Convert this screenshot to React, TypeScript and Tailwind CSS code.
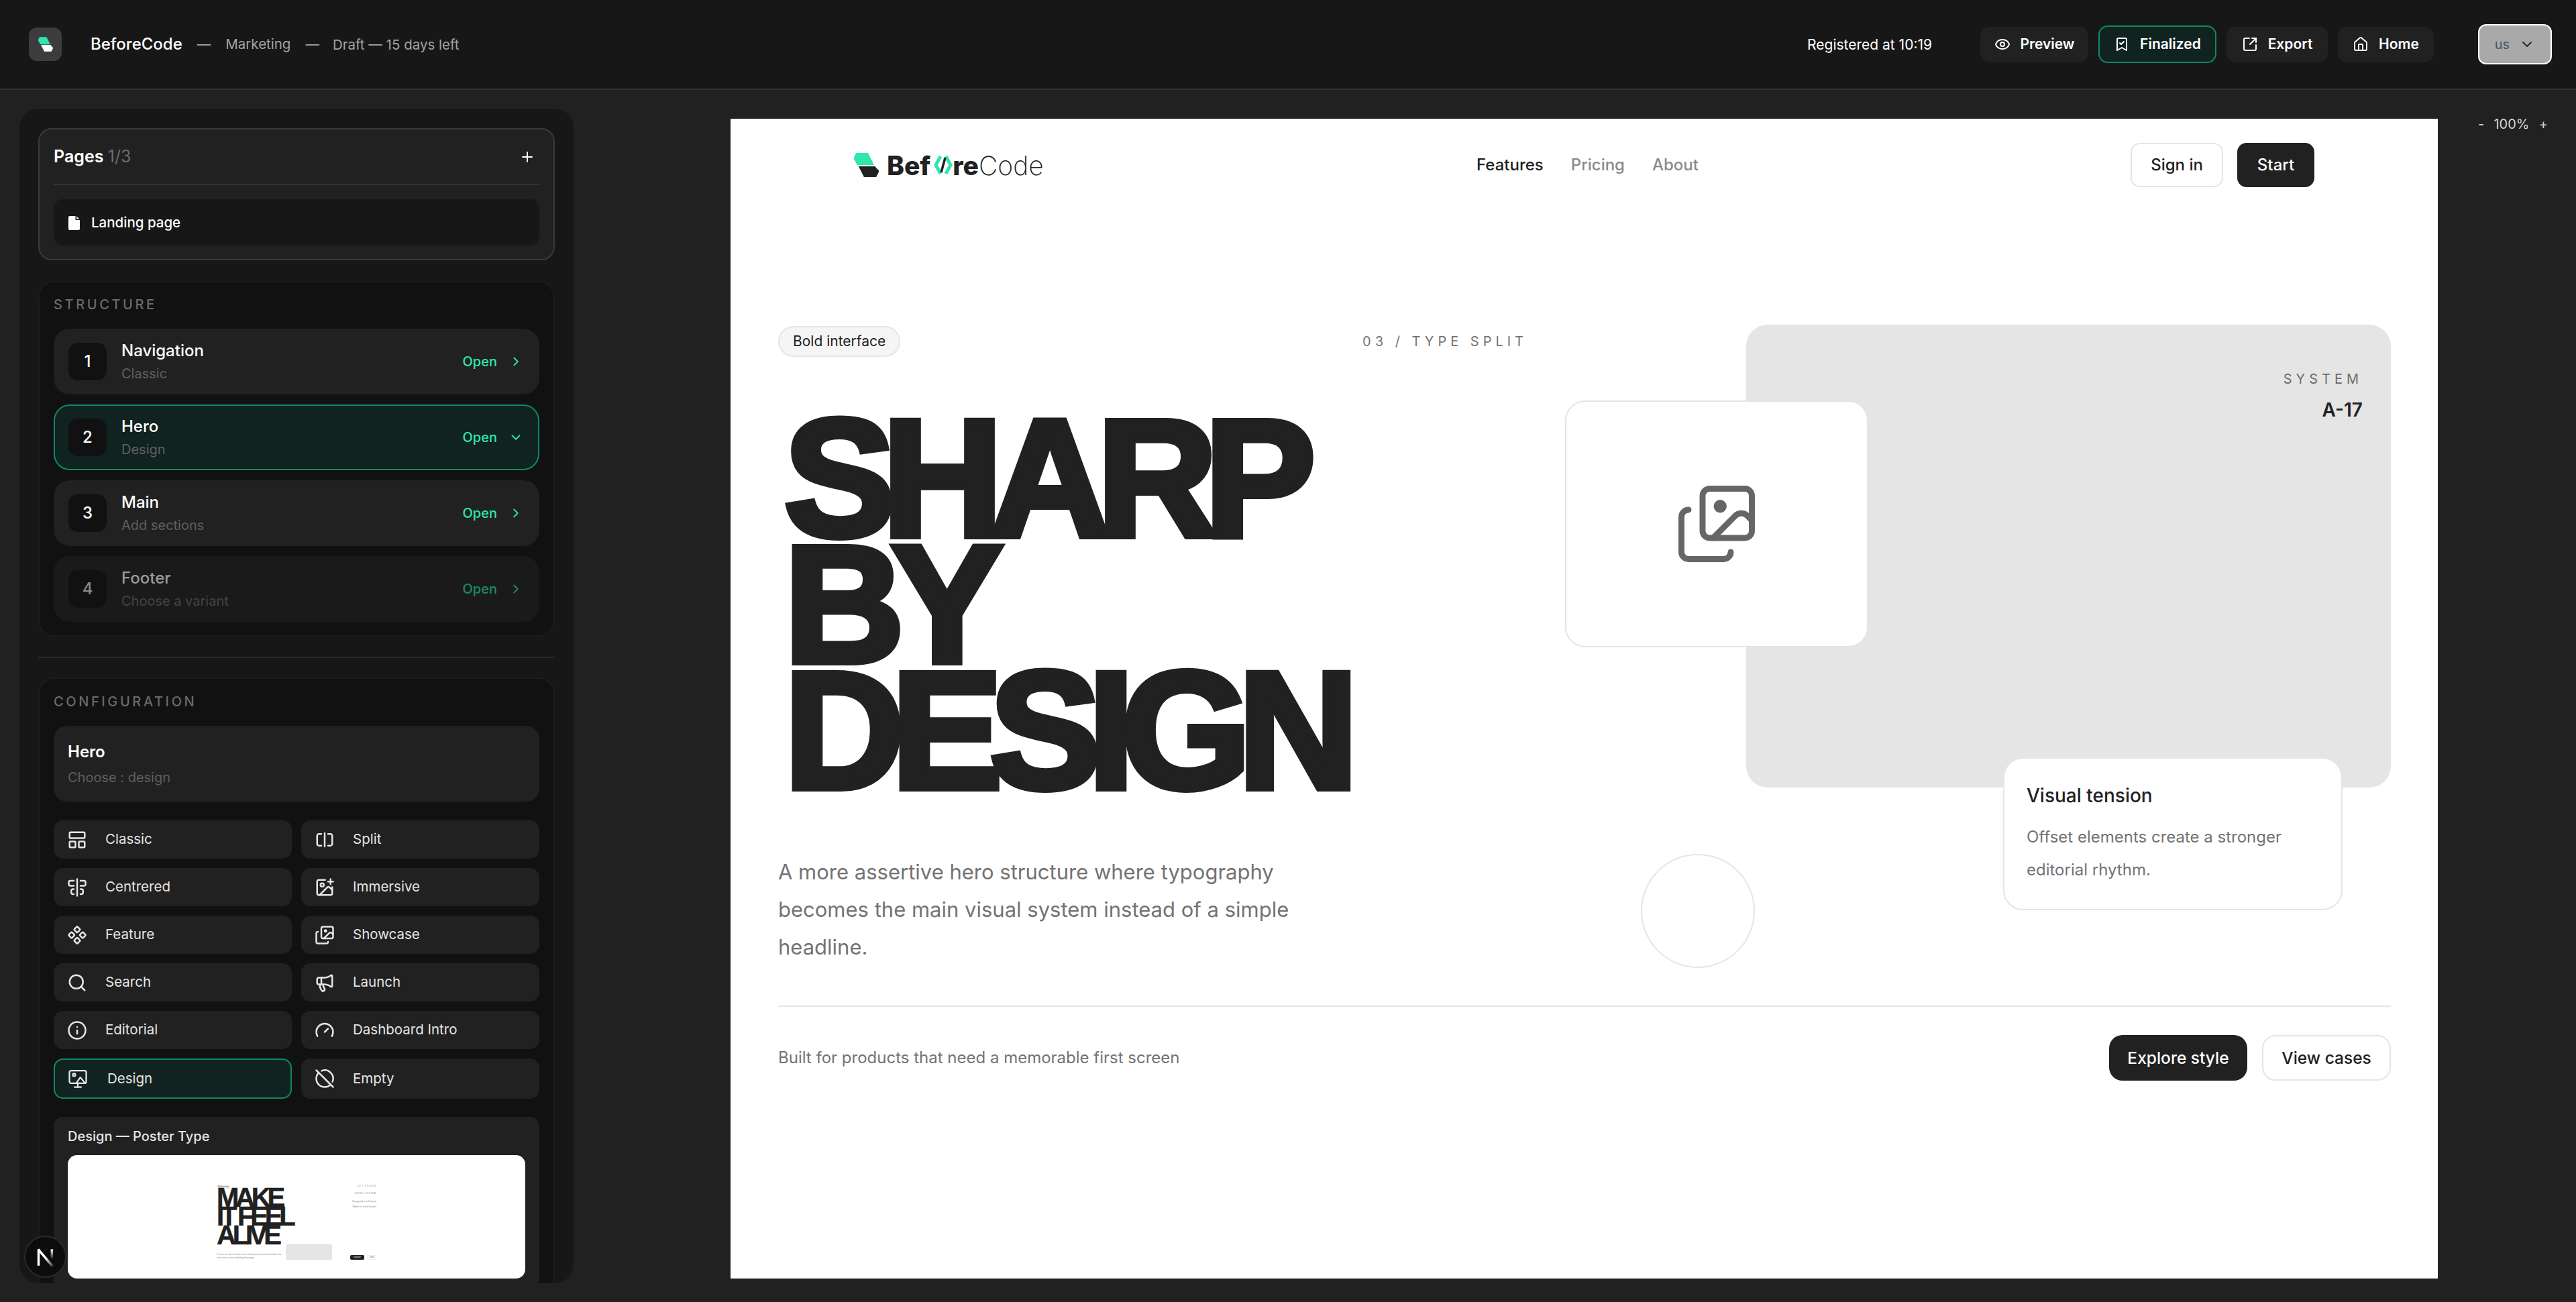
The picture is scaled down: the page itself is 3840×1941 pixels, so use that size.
import {
  AlignCenterVertical,
  BookmarkCheck,
  ChevronDown,
  ChevronRight,
  CircleOff,
  Component,
  Eye,
  Gauge,
  House,
  ImagePlus,
  Images,
  Info,
  LayoutPanelTop,
  Megaphone,
  Plus,
  Search,
  SquareArrowOutUpRight,
  SquareSplitHorizontal,
} from "lucide-react";
import type { ComponentType } from "react";

function LogoMark({ bottom, className }: { bottom: string; className: string }) {
  return (
    <svg viewBox="0 0 108 103" className={className}>
      <polygon points="10,0 60,0 85,50 15,50 0,22" fill="#2ee6b0" stroke="#2ee6b0" strokeWidth="3" strokeLinejoin="round" />
      <polygon points="22,58 90,58 108,78 95,103 45,103" fill={bottom} stroke={bottom} strokeWidth="3" strokeLinejoin="round" />
    </svg>
  );
}

function MonitorImage({ className }: { className: string }) {
  return (
    <svg viewBox="0 0 24 24" fill="none" stroke="currentColor" strokeWidth="1.8" strokeLinecap="round" strokeLinejoin="round" className={className}>
      <rect x="2" y="2.5" width="20" height="15" rx="2" />
      <circle cx="7.5" cy="7.5" r="1.6" />
      <path d="m10 17.5 5-7 5 6" />
      <path d="M12 17.5V22" />
      <path d="M8 22h8" />
    </svg>
  );
}

function HeaderButton({
  icon: Icon,
  label,
  width,
  active,
}: {
  icon: ComponentType<{ className?: string }>;
  label: string;
  width: string;
  active?: boolean;
}) {
  return (
    <button
      className={
        active
          ? `flex h-[56px] items-center justify-center gap-[15px] rounded-[14px] border-2 border-[#0f8a5f] bg-[#112320] text-[21px] font-semibold text-white ${width}`
          : `flex h-[53px] items-center justify-center gap-[15px] rounded-[14px] bg-[#212121] text-[21px] font-semibold text-white ${width}`
      }
    >
      <Icon className="h-[24px] w-[24px]" />
      <span>{label}</span>
    </button>
  );
}

function TopBar() {
  return (
    <header className="flex h-[134px] shrink-0 items-center justify-between border-b-2 border-[#333333] bg-[#171717] pl-[43px] pr-[36px]">
      <div className="flex items-center">
        <div className="flex h-[50px] w-[49px] items-center justify-center rounded-[12px] bg-[#3c3c3c]">
          <LogoMark bottom="#ffffff" className="h-[22px] w-[22px]" />
        </div>
        <span className="ml-[43px] text-[24px] font-medium text-white">BeforeCode</span>
        <span className="ml-[22px] text-[20.5px] text-[#a3a3a3]">—</span>
        <span className="ml-[22px] text-[20.5px] text-[#a3a3a3]">Marketing</span>
        <span className="ml-[22px] text-[20.5px] text-[#a3a3a3]">—</span>
        <span className="ml-[20px] mt-[2px] text-[20.5px] text-[#a3a3a3]">Draft — 15 days left</span>
      </div>
      <div className="flex items-center">
        <span className="mr-[72px] mt-[1px] text-[21px] text-white">Registered at 10:19</span>
        <div className="flex items-center gap-[15px]">
          <HeaderButton icon={Eye} label="Preview" width="w-[161px]" />
          <HeaderButton icon={BookmarkCheck} label="Finalized" width="w-[176px]" active />
          <HeaderButton icon={SquareArrowOutUpRight} label="Export" width="w-[151px]" />
          <HeaderButton icon={House} label="Home" width="w-[143px]" />
        </div>
        <button className="ml-[66px] flex h-[60px] w-[110px] items-center justify-center gap-[14px] rounded-[12px] border-2 border-white bg-[#a9a9a9] text-[20px] text-[#4b5563]">
          <span>us</span>
          <ChevronDown className="h-[24px] w-[24px] text-[#1f2937]" />
        </button>
      </div>
    </header>
  );
}

const structure = [
  { n: "1", title: "Navigation", sub: "Classic" },
  { n: "2", title: "Hero", sub: "Design", active: true },
  { n: "3", title: "Main", sub: "Add sections" },
  { n: "4", title: "Footer", sub: "Choose a variant", dim: true },
];

function StructureRow({
  n,
  title,
  sub,
  active,
  dim,
}: {
  n: string;
  title: string;
  sub: string;
  active?: boolean;
  dim?: boolean;
}) {
  const Chevron = active ? ChevronDown : ChevronRight;
  return (
    <div
      className={
        active
          ? "flex h-[98px] items-center rounded-[24px] border-2 border-[#0f8a5f] bg-[#112320] pl-[20px] pr-[22px]"
          : dim
            ? "flex h-[98px] items-center rounded-[24px] bg-[#1a1a1a] pl-[22px] pr-[24px]"
            : "flex h-[98px] items-center rounded-[24px] bg-[#212121] pl-[22px] pr-[24px]"
      }
    >
      <div
        className={
          dim
            ? "flex h-[56px] w-[57px] items-center justify-center rounded-[14px] bg-[#111111] text-[24px] font-medium text-[#8a8a8a]"
            : "flex h-[56px] w-[57px] items-center justify-center rounded-[14px] bg-[#111111] text-[24px] font-medium text-white"
        }
      >
        {n}
      </div>
      <div className="ml-[22px] flex-1 pt-[2px]">
        <div className={dim ? "text-[24px] font-medium leading-[35px] text-[#9a9a9a]" : "text-[24px] font-medium leading-[35px] text-white"}>{title}</div>
        <div className={dim ? "text-[20px] leading-[35px] text-[#444444]" : "text-[20px] leading-[35px] text-[#5f5f5f]"}>{sub}</div>
      </div>
      <span className={dim ? "text-[20px] font-medium text-[#1c8a66]" : "text-[20px] font-medium text-[#2ee6b0]"}>Open</span>
      <Chevron className={dim ? "ml-[17px] h-[22px] w-[22px] text-[#1c8a66]" : "ml-[17px] h-[22px] w-[22px] text-[#2ee6b0]"} />
    </div>
  );
}

const variants: { icon: ComponentType<{ className: string }>; label: string; active?: boolean }[] = [
  { icon: LayoutPanelTop, label: "Classic" },
  { icon: SquareSplitHorizontal, label: "Split" },
  { icon: AlignCenterVertical, label: "Centrered" },
  { icon: ImagePlus, label: "Immersive" },
  { icon: Component, label: "Feature" },
  { icon: Images, label: "Showcase" },
  { icon: Search, label: "Search" },
  { icon: Megaphone, label: "Launch" },
  { icon: Info, label: "Editorial" },
  { icon: Gauge, label: "Dashboard Intro" },
  { icon: MonitorImage, label: "Design", active: true },
  { icon: CircleOff, label: "Empty" },
];

function MiniPreview() {
  return (
    <div className="h-[184px] rounded-[14px] bg-white pl-[222px] pt-[44px]">
      <div className="flex w-[238px] justify-between">
        <div>
          <div className="flex h-[7px] w-[20px] items-center justify-center rounded-full bg-[#eeeeee] text-[3px] text-[#555555]">
            Bold poster
          </div>
          <div className="mt-[-2px] font-['Liberation_Sans',sans-serif] text-[40px] font-bold leading-[28px] tracking-[-5.2px] text-[#212121] [-webkit-text-stroke:0.5px_#212121]">
            <div>MAKE</div>
            <div>IT FEEL</div>
            <div>ALIVE</div>
          </div>
        </div>
        <div className="flex flex-col items-end gap-[3px] text-[3.5px] text-[#888888]">
          <span className="tracking-[0.2em]">01 / STUDIO</span>
          <span className="mt-[3px] tracking-[0.1em]">VISUAL SYSTEM</span>
          <span className="mt-[3px]">Typography led layout</span>
          <span>Made for bold brands</span>
        </div>
      </div>
      <div className="flex w-[238px] items-start">
        <div className="mt-[13px] w-[100px] text-[3.5px] leading-[5px] text-[#888888]">
          A hero for teams that want clarity and presence before the user even starts reading the page.
        </div>
        <div className="ml-[3px] h-[23px] w-[69px] rounded-[3px] bg-[#e5e5e5]" />
        <div className="ml-auto mt-[16px] flex items-center gap-[4px]">
          <div className="flex h-[7px] w-[21px] items-center justify-center rounded-[2px] bg-[#212121] text-[3px] text-white">Explore</div>
          <div className="flex h-[7px] w-[14px] items-center justify-center rounded-[2px] border border-[#eeeeee] text-[3px] text-[#555555]">View</div>
        </div>
      </div>
    </div>
  );
}

function Sidebar() {
  return (
    <aside className="ml-[29px] mt-[28px] flex h-[1751px] w-[826px] shrink-0 flex-col overflow-hidden rounded-[28px] bg-[#171717] px-[28px] pt-[29px]">
      <section className="shrink-0 rounded-[20px] border-2 border-[#3a3a3a] bg-[#212121] px-[21px] pb-[20px]">
        <div className="flex h-[83px] items-center justify-between border-b-2 border-[#333333]">
          <div className="text-[25px] font-semibold text-white">
            Pages <span className="font-normal text-[#6b6b6b]">1/3</span>
          </div>
          <Plus className="mr-[6px] h-[24px] w-[24px] text-white" />
        </div>
        <div className="mt-[21px] flex h-[69px] items-center rounded-[14px] bg-[#171717] pl-[22px] pt-[2px]">
          <svg viewBox="0 0 17 21" className="h-[21px] w-[17px]" fill="#ffffff">
            <path d="M2 0h8.5v6H17v13a2 2 0 0 1-2 2H2a2 2 0 0 1-2-2V2a2 2 0 0 1 2-2z" />
            <path d="M12 0.5 16.5 4.5H12z" />
          </svg>
          <span className="ml-[17px] text-[20.5px] font-medium text-white">Landing page</span>
        </div>
      </section>

      <section className="mt-[31px] shrink-0 rounded-[24px] border-2 border-[#1c1c1c] bg-[#111111] px-[21px] pb-[20px] pt-[18px]">
        <div className="text-[20px] font-medium leading-[30px] tracking-[0.18em] text-[#6b6b6b]">STRUCTURE</div>
        <div className="mt-[21px] flex flex-col gap-[15px]">
          {structure.map((row) => (
            <StructureRow key={row.n} {...row} />
          ))}
        </div>
      </section>

      <div className="mt-[30px] h-[2px] shrink-0 bg-[#2a2a2a]" />

      <section className="mt-[29px] shrink-0 rounded-[24px] border-2 border-[#1c1c1c] bg-[#111111] px-[21px] pt-[19px]">
        <div className="text-[20px] font-medium leading-[30px] tracking-[0.18em] text-[#6b6b6b]">CONFIGURATION</div>
        <div className="mt-[21px] flex h-[113px] flex-col justify-center rounded-[20px] bg-[#212121] pl-[21px] pt-[2px]">
          <div className="text-[24px] font-semibold leading-[38px] text-white">Hero</div>
          <div className="text-[20px] leading-[38px] text-[#5f5f5f]">Choose : design</div>
        </div>
        <div className="mt-[28px] grid grid-cols-2 gap-x-[14px] gap-y-[14px]">
          {variants.map(({ icon: Icon, label, active }, i) => (
            <div
              key={label}
              className={
                active
                  ? "flex h-[60px] items-center rounded-[14px] border-2 border-[#0f8a5f] bg-[#112320] pl-[19px] text-[20.5px] text-[#e5e5e5]"
                  : i >= 10
                    ? "flex h-[60px] items-center rounded-[14px] bg-[#212121] pl-[20px] text-[20.5px] text-[#e5e5e5]"
                    : "flex h-[57px] items-center rounded-[14px] bg-[#212121] pl-[20px] text-[20.5px] text-[#e5e5e5]"
              }
            >
              <Icon className="h-[30px] w-[30px] shrink-0" />
              <span className={active ? "ml-[29px]" : "ml-[27px]"}>{label}</span>
            </div>
          ))}
        </div>
        <div className="mt-[27px] rounded-t-[14px] bg-[#212121] px-[21px] pb-[20px]">
          <div className="flex h-[57px] items-center text-[20px] font-medium text-[#e5e5e5]">Design — Poster Type</div>
          <MiniPreview />
        </div>
      </section>
    </aside>
  );
}

function PreviewHeader() {
  return (
    <nav className="flex h-[138px] items-center justify-between px-[184px]">
      <div className="flex w-[284px] items-center">
        <LogoMark bottom="#212121" className="h-[36px] w-[37px] shrink-0" />
        <div className="ml-[12px] flex items-center text-[39px] leading-none text-[#212121]">
          <span className="font-extrabold">Bef</span>
          <svg viewBox="0 0 28 30" className="ml-[5px] h-[30px] w-[28px]" fill="none" strokeWidth="5">
            <path d="M10 2 3 15l7 13" stroke="#2ee6b0" />
            <path d="M18 2l7 13-7 13" stroke="#2ee6b0" />
            <path d="M17 4l-6 22" stroke="#212121" strokeWidth="3.5" />
          </svg>
          <span className="font-extrabold">re</span>
          <span className="font-extralight">Code</span>
        </div>
      </div>
      <div className="flex items-center gap-[41px] text-[24px] font-medium">
        <span className="text-[#212121]">Features</span>
        <span className="text-[#8a8a8a]">Pricing</span>
        <span className="text-[#8a8a8a]">About</span>
      </div>
      <div className="flex items-center gap-[21px]">
        <button className="flex h-[66px] w-[138px] items-center justify-center rounded-[14px] border-2 border-[#e5e5e5] text-[24px] font-medium text-[#212121]">
          Sign in
        </button>
        <button className="flex h-[66px] w-[115px] items-center justify-center rounded-[14px] bg-[#212121] text-[24px] font-medium text-white">
          Start
        </button>
      </div>
    </nav>
  );
}

function HeroVisual() {
  return (
    <div className="relative h-[958px] flex-1">
      <div className="absolute left-[270px] right-0 top-0 h-[690px] rounded-[32px] bg-[#e5e5e5]">
        <div className="absolute right-[42px] top-[66px] flex flex-col items-end">
          <span className="text-[20px] leading-[30px] tracking-[0.3em] text-[#6b6b6b]">SYSTEM</span>
          <span className="mt-[16px] text-[28px] font-semibold leading-[30px] text-[#212121]">A-17</span>
        </div>
      </div>
      <div className="absolute left-0 top-[113px] flex h-[368px] w-[452px] items-center justify-center rounded-[30px] border-2 border-[#e5e5e5] bg-white">
        <Images className="h-[126px] w-[126px] text-[#666666]" strokeWidth={1.7} />
      </div>
      <div className="absolute left-[653px] top-[645px] h-[228px] w-[506px] rounded-[30px] border-2 border-[#e5e5e5] bg-white px-[33px] pt-[34px]">
        <div className="text-[28px] font-medium leading-[42px] text-[#212121]">Visual tension</div>
        <p className="mt-[16px] text-[24px] leading-[49px] text-[#737373]">Offset elements create a stronger editorial rhythm.</p>
      </div>
      <div className="absolute left-[113px] top-[789px] h-[170px] w-[170px] rounded-full border-2 border-[#e5e5e5]" />
    </div>
  );
}

function PreviewCanvas() {
  return (
    <div className="ml-[234px] mt-[43px] h-[1729px] w-[2545px] shrink-0 overflow-hidden bg-white">
      <PreviewHeader />
      <div className="pl-[71px] pr-[70px]">
        <div className="mt-[169px] flex gap-[56px]">
          <div className="w-[1117px] shrink-0">
            <div className="flex h-[50px] items-center justify-between">
              <span className="flex h-[46px] items-center rounded-full border-2 border-[#e5e5e5] bg-[#f5f5f5] px-[20px] text-[21px] text-[#212121]">
                Bold interface
              </span>
              <span className="text-[20px] tracking-[0.3em] text-[#737373]">03 / TYPE SPLIT</span>
            </div>
            <h1 className="ml-[9px] mt-[85px] font-['Liberation_Sans',sans-serif] text-[248px] font-bold leading-[188px] tracking-[-19px] text-[#212121] [-webkit-text-stroke:10px_#212121]">
              <div>SHARP</div>
              <div>BY</div>
              <div>DESIGN</div>
            </h1>
            <p className="mt-[89px] w-[800px] text-[31px] leading-[56px] text-[#737373]">
              A more assertive hero structure where typography becomes the main visual system instead of a simple headline.
            </p>
          </div>
          <HeroVisual />
        </div>
        <div className="mt-[57px] flex items-center justify-between border-t-2 border-[#e5e5e5] pt-[42px]">
          <span className="text-[24px] text-[#737373]">Built for products that need a memorable first screen</span>
          <div className="flex items-center gap-[22px]">
            <button className="flex h-[68px] w-[206px] items-center justify-center rounded-[20px] bg-[#212121] text-[24.5px] font-medium text-white">
              Explore style
            </button>
            <button className="flex h-[68px] w-[192px] items-center justify-center rounded-[20px] border-2 border-[#e5e5e5] text-[24.5px] font-medium text-[#212121]">
              View cases
            </button>
          </div>
        </div>
      </div>
    </div>
  );
}

export default function App() {
  return (
    <div className="relative flex h-screen w-full flex-col overflow-hidden bg-[#212121] font-['Inter',sans-serif]">
      <TopBar />
      <div className="flex flex-1">
        <Sidebar />
        <PreviewCanvas />
        <div className="ml-[60px] mt-[36px] flex w-[104px] justify-between text-[20px] leading-[30px] text-[#d4d4d4]">
          <span>-</span>
          <span>100%</span>
          <span>+</span>
        </div>
      </div>
      {/* dev badge sits over the sidebar */}
      <div className="absolute left-[36px] top-[1842px] flex h-[63px] w-[63px] items-center justify-center rounded-full border-2 border-[#2a2a2a] bg-[#0c0c0c]">
        <svg viewBox="0 0 24 24" className="h-[28px] w-[28px]" fill="none" strokeWidth="3">
          <defs>
            <linearGradient id="n-fade" x1="0" y1="0" x2="1" y2="1">
              <stop offset="0.5" stopColor="#ffffff" />
              <stop offset="1" stopColor="#ffffff" stopOpacity="0.2" />
            </linearGradient>
            <linearGradient id="n-bar" x1="0" y1="0" x2="0" y2="1">
              <stop offset="0" stopColor="#ffffff" />
              <stop offset="1" stopColor="#ffffff" stopOpacity="0" />
            </linearGradient>
          </defs>
          <path d="M3 23V2" stroke="#ffffff" />
          <path d="M2.5 2 21 24" stroke="url(#n-fade)" />
          <rect x="18.5" y="2" width="3" height="13" fill="url(#n-bar)" stroke="none" />
        </svg>
      </div>
    </div>
  );
}
